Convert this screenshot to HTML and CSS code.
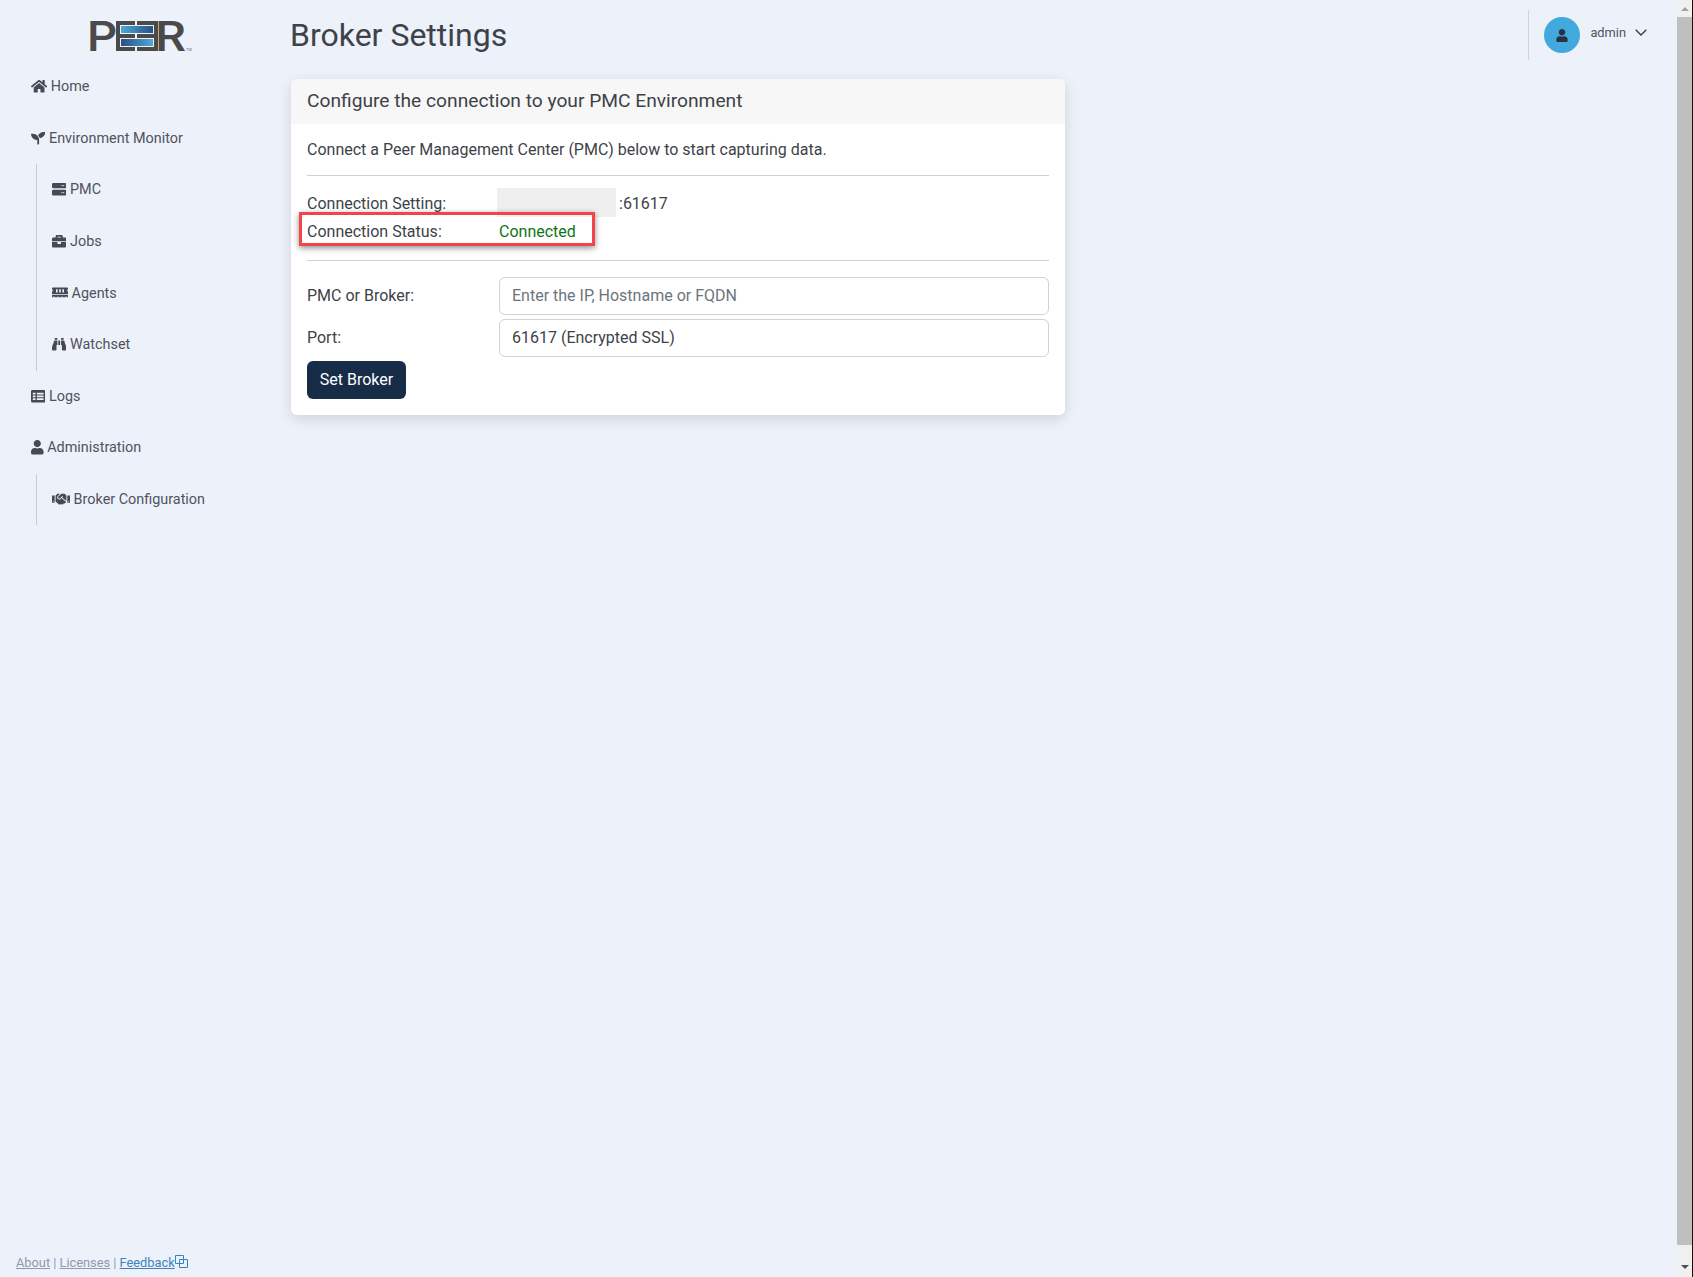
FILE: index.html
```html
<!DOCTYPE html>
<html lang="en">
<head>
  <meta charset="UTF-8" />
  <title>Broker Settings</title>
  <link rel="stylesheet" href="styles.css">
</head>
<body>

  <div class="app">

    <!-- Sidebar -->
    <aside class="sidebar">
      <svg class="logo" viewBox="-4 -10 118 52" width="118" height="52" role="img" aria-label="PEER">
        <defs>
          <linearGradient id="barTop" x1="0" x2="1" y1="0" y2="0">
            <stop offset="0" stop-color="#4fa8d8"/>
            <stop offset="1" stop-color="#2b4f80"/>
          </linearGradient>
          <linearGradient id="barBottom" x1="0" x2="1" y1="0" y2="0">
            <stop offset="0" stop-color="#2b4f80"/>
            <stop offset="1" stop-color="#4fa8d8"/>
          </linearGradient>
        </defs>
        <text class="logo-letter" x="-3" y="30.5" textLength="30" lengthAdjust="spacingAndGlyphs">P</text>
        <text class="logo-letter" x="65" y="30.5" textLength="31" lengthAdjust="spacingAndGlyphs">R</text>
        <!-- the two mirrored E's around the blue bars -->
        <rect x="26" y="1" width="4" height="30" fill="#4a4a4a"/>
        <rect x="26" y="1" width="19" height="4" fill="#4a4a4a"/>
        <rect x="26" y="14" width="19" height="4" fill="#4a4a4a"/>
        <rect x="26" y="27" width="19" height="4" fill="#4a4a4a"/>
        <rect x="64" y="1" width="4" height="30" fill="#4a4a4a"/>
        <rect x="47" y="1" width="21" height="4" fill="#4a4a4a"/>
        <rect x="47" y="14" width="21" height="4" fill="#4a4a4a"/>
        <rect x="47" y="27" width="21" height="4" fill="#4a4a4a"/>
        <rect x="31" y="6" width="32" height="7" fill="url(#barTop)"/>
        <rect x="31" y="19" width="32" height="7" fill="url(#barBottom)"/>
        <text class="logo-tm" x="96" y="31">TM</text>
      </svg>

      <nav class="nav">
        <a class="nav-item">
          <svg class="icon" viewBox="0 0 576 512"><path d="M280.37 148.26L96 300.11V464a16 16 0 0 0 16 16l112.06-.29a16 16 0 0 0 15.92-16V368a16 16 0 0 1 16-16h64a16 16 0 0 1 16 16v95.64a16 16 0 0 0 16 16.05L464 480a16 16 0 0 0 16-16V300L295.67 148.26a12.19 12.19 0 0 0-15.3 0zM571.6 251.47L488 182.56V44.05a12 12 0 0 0-12-12h-56a12 12 0 0 0-12 12v72.61L318.47 43a48 48 0 0 0-61 0L4.34 251.47a12 12 0 0 0-1.6 16.9l25.5 31A12 12 0 0 0 45.15 301l235.22-193.74a12.19 12.19 0 0 1 15.3 0L530.9 301a12 12 0 0 0 16.9-1.6l25.5-31a12 12 0 0 0-1.7-16.93z"/></svg>
          Home
        </a>
        <a class="nav-item">
          <svg class="icon" viewBox="0 0 512 512"><path d="M64 96H0c0 123.7 100.3 224 224 224v144c0 8.8 7.2 16 16 16h32c8.8 0 16-7.2 16-16V320C288 196.3 187.7 96 64 96zm384-64c-84.2 0-157.4 46.5-195.7 115.2 27.7 30.2 48.2 66.9 59 107.6C424 243.1 512 147.9 512 32h-64z"/></svg>
          Environment Monitor
        </a>
        <div class="sub-nav">
          <a class="nav-item">
            <svg class="icon" viewBox="0 0 512 512"><path fill-rule="evenodd" d="M48 32h416a48 48 0 0 1 48 48v96a48 48 0 0 1-48 48H48a48 48 0 0 1-48-48V80a48 48 0 0 1 48-48zm368 72a24 24 0 1 0 0 48 24 24 0 0 0 0-48zm-64 0a24 24 0 1 0 0 48 24 24 0 0 0 0-48zM48 272h416a48 48 0 0 1 48 48v112a48 48 0 0 1-48 48H48a48 48 0 0 1-48-48V320a48 48 0 0 1 48-48zm368 80a24 24 0 1 0 0 48 24 24 0 0 0 0-48zm-64 0a24 24 0 1 0 0 48 24 24 0 0 0 0-48z"/></svg>
            PMC
          </a>
          <a class="nav-item">
            <svg class="icon" viewBox="0 0 512 512"><path d="M320 336c0 8.84-7.16 16-16 16h-96c-8.84 0-16-7.16-16-16v-48H0v144c0 25.6 22.4 48 48 48h416c25.6 0 48-22.4 48-48V288H320v48zm144-208h-80V80c0-25.6-22.4-48-48-48H176c-25.6 0-48 22.4-48 48v48H48c-25.6 0-48 22.4-48 48v80h512v-80c0-25.6-22.4-48-48-48zm-144 0H192V96h128v32z"/></svg>
            Jobs
          </a>
          <a class="nav-item">
            <svg class="icon icon-memory" viewBox="0 0 640 512"><path d="M640 130.94V96c0-17.67-14.33-32-32-32H32C14.33 64 0 78.33 0 96v34.94c18.6 6.61 32 24.19 32 45.06s-13.4 38.45-32 45.06V320h640v-98.94c-18.6-6.61-32-24.19-32-45.06s13.4-38.45 32-45.06zM224 256h-64V128h64v128zm128 0h-64V128h64v128zm128 0h-64V128h64v128zM0 448h64v-26.67c0-8.84 7.16-16 16-16s16 7.16 16 16V448h128v-26.67c0-8.84 7.16-16 16-16s16 7.16 16 16V448h128v-26.67c0-8.84 7.16-16 16-16s16 7.16 16 16V448h128v-26.67c0-8.84 7.16-16 16-16s16 7.16 16 16V448h64v-96H0v96z"/></svg>
            Agents
          </a>
          <a class="nav-item">
            <svg class="icon" viewBox="0 0 512 512"><path d="M416 48c0-8.84-7.16-16-16-16h-64c-8.84 0-16 7.16-16 16v48h96V48zM63.91 159.99C61.4 253.84 3.46 274.22 0 404v44c0 17.67 14.33 32 32 32h96c17.67 0 32-14.33 32-32V288h32V128H95.84c-17.63 0-31.45 14.37-31.93 31.99zm384.18 0c-.48-17.62-14.3-31.99-31.93-31.99H320v160h32v160c0 17.67 14.33 32 32 32h96c17.67 0 32-14.33 32-32v-44c-3.46-129.78-61.4-150.16-63.91-244.01zM176 32h-64c-8.84 0-16 7.16-16 16v48h96V48c0-8.84-7.16-16-16-16zm48 256h64V128h-64v160z"/></svg>
            Watchset
          </a>
        </div>
        <a class="nav-item">
          <svg class="icon" viewBox="0 0 512 512"><path fill-rule="evenodd" d="M48 32h416a48 48 0 0 1 48 48v352a48 48 0 0 1-48 48H48a48 48 0 0 1-48-48V80a48 48 0 0 1 48-48zm16 104v64h96v-64zm144 0v64h240v-64zM64 232v64h96v-64zm144 0v64h240v-64zM64 328v64h96v-64zm144 0v64h240v-64z"/></svg>
          Logs
        </a>
        <a class="nav-item">
          <svg class="icon" viewBox="0 0 448 512"><path d="M224 256c70.7 0 128-57.3 128-128S294.7 0 224 0 96 57.3 96 128s57.3 128 128 128zm89.6 32h-16.7c-22.2 10.2-46.9 16-72.9 16s-50.6-5.8-72.9-16h-16.7C60.2 288 0 348.2 0 422.4V464c0 26.5 21.5 48 48 48h352c26.5 0 48-21.5 48-48v-41.6c0-74.2-60.2-134.4-134.4-134.4z"/></svg>
          Administration
        </a>
        <div class="sub-nav">
          <a class="nav-item">
            <svg class="icon" viewBox="0 0 640 512"><path d="M434.7 64h-85.9c-8 0-15.7 3-21.6 8.4l-98.3 90c-.1.1-.2.3-.3.4-16.6 15.6-16.3 40.5-2.1 56 12.7 13.9 39.4 17.6 56.1 2.7.1-.1.3-.1.4-.2l79.9-73.2c6.5-5.9 16.7-5.5 22.6 1 6 6.5 5.5 16.6-1 22.6l-26.1 23.9L504 313.8c2.9 2.4 5.5 5 7.9 7.7V128l-54.6-54.6c-5.9-6-14.1-9.4-22.6-9.4zM544 128.2v223.9c0 17.7 14.3 32 32 32h64V128.2h-96zm48 223.9c-8.8 0-16-7.2-16-16s7.2-16 16-16 16 7.2 16 16-7.2 16-16 16zM0 384h64c17.7 0 32-14.3 32-32V128.2H0V384zm48-63.9c8.8 0 16 7.2 16 16s-7.2 16-16 16-16-7.2-16-16c0-8.9 7.2-16 16-16zm435.9 18.6L334.6 217.5l-30 27.5c-29.7 27.1-75.2 24.5-101.7-4.4-26.9-29.4-24.8-74.9 4.4-101.7L289.1 64h-83.8c-8.5 0-16.6 3.4-22.6 9.4L128 128v223.9h18.3l90.5 81.9c27.4 22.3 67.7 18.1 90-9.3l.2-.2 17.9 15.5c15.9 13 39.4 10.5 52.3-5.4l31.4-38.6 5.4 4.4c13.7 11.1 33.9 9.1 45-4.7l9.5-11.7c11.2-13.8 9.1-33.9-4.6-45.1z"/></svg>
            Broker Configuration
          </a>
        </div>
      </nav>

      <footer class="foot">
        <a class="foot-link">About</a> | <a class="foot-link">Licenses</a> | <a class="foot-link foot-link-on">Feedback<svg class="foot-icon" viewBox="0 0 13 13"><path d="M.5.5h8v8h-8zM4.5 4.5h8v8h-8z" fill="none" stroke="currentColor"/></svg></a>
      </footer>
    </aside>

    <!-- Main -->
    <main class="main">
      <header class="topbar">
        <h1 class="title">Broker Settings</h1>
        <div class="user">
          <span class="avatar">
            <svg viewBox="0 0 448 512" width="12" height="13"><path d="M224 256c70.7 0 128-57.3 128-128S294.7 0 224 0 96 57.3 96 128s57.3 128 128 128zm89.6 32h-16.7c-22.2 10.2-46.9 16-72.9 16s-50.6-5.8-72.9-16h-16.7C60.2 288 0 348.2 0 422.4V464c0 26.5 21.5 48 48 48h352c26.5 0 48-21.5 48-48v-41.6c0-74.2-60.2-134.4-134.4-134.4z"/></svg>
          </span>
          <span class="user-name">admin</span>
          <svg class="chevron" viewBox="0 0 12 7" width="12" height="7"><path d="M.7.7L6 6l5.3-5.3" fill="none" stroke="#33394a" stroke-width="1.3"/></svg>
        </div>
      </header>

      <section class="card">
        <div class="card-head">Configure the connection to your PMC Environment</div>
        <div class="card-body">
          <p class="intro">Connect a Peer Management Center (PMC) below to start capturing data.</p>
          <hr class="rule">
          <div class="row">
            <span>Connection Setting:</span>
            <span class="value"><span class="redacted"></span>:61617</span>
          </div>
          <div class="row row-status">
            <span>Connection Status:</span>
            <span class="connected">Connected</span>
            <div class="callout"></div>
          </div>
          <hr class="rule rule-second">
          <div class="field">
            <label class="field-label">PMC or Broker:</label>
            <input class="input" type="text" placeholder="Enter the IP, Hostname or FQDN">
          </div>
          <div class="field">
            <label class="field-label">Port:</label>
            <input class="input" type="text" value="61617 (Encrypted SSL)">
          </div>
          <button class="btn">Set Broker</button>
        </div>
      </section>
    </main>
  </div>

  <!-- Scrollbar -->
  <div class="scrollbar">
    <span class="arrow arrow-up"></span>
    <span class="thumb"></span>
    <span class="arrow arrow-down"></span>
  </div>

</body>
</html>
```

FILE: styles.css
```css
html, body {
  margin: 0;
  padding: 0;
  height: 100%;
  overflow: hidden;
  font-family: 'Roboto', sans-serif;
  background: #edf1f9;
  color: #3d4249;
}

.app {
  display: flex;
  height: 100vh;
}

/* Sidebar */
.sidebar {
  width: 291px;
  flex: none;
  display: flex;
  flex-direction: column;
}

.logo {
  display: block;
  margin: 10px 0 -1px 86px;
  flex: none;
}

.logo-letter {
  font-family: 'Roboto', sans-serif;
  font-weight: 500;
  font-size: 42px;
  fill: #4a4a4a;
}

.logo-tm {
  font-family: 'Liberation Sans', sans-serif;
  font-size: 4px;
  fill: #6a6a6a;
}

.nav {
  padding-left: 31px;
}

.nav-item {
  display: flex;
  align-items: center;
  height: 51.6px;
  font-size: 14.4px;
  color: #50535f;
}

.icon {
  height: 14.4px;
  width: auto;
  margin: 0 3.6px 1px 0;
  fill: #474a54;
  flex: none;
}

.icon-memory {
  height: 12.8px;
}

.sub-nav {
  margin-left: 5px;
  padding-left: 15px;
  border-left: 1px solid #cdcbc9;
}

.foot {
  margin-top: auto;
  padding: 0 0 7px 16px;
  font-size: 12.8px;
  line-height: 15px;
  color: #8d99ad;
}

.foot-link {
  text-decoration: underline;
}

.foot-link-on {
  color: #3c83bd;
}

.foot-icon {
  width: 13px;
  height: 13px;
  vertical-align: -1px;
}

/* Main */
.main {
  flex: 1;
  min-width: 0;
}

.topbar {
  display: flex;
  justify-content: space-between;
  height: 79px;
}

.title {
  margin: 15px 0 0 -1px;
  font-size: 32px;
  line-height: 40px;
  font-weight: 400;
  color: #3d4249;
}

.user {
  display: flex;
  align-items: center;
  align-self: flex-start;
  height: 50px;
  margin: 10px 46px 0 0;
  padding-left: 15px;
  border-left: 1px solid #d0d3d8;
}

.avatar {
  display: flex;
  justify-content: center;
  align-items: center;
  width: 36px;
  height: 36px;
  border-radius: 50%;
  background: #41a9dc;
  margin-right: 10px;
}

.avatar svg {
  fill: #2b3140;
}

.user-name {
  font-size: 12.8px;
  color: #50535f;
  margin: 0 9px 5px 0;
}

.chevron {
  margin-bottom: 5px;
}

.card {
  width: 774px;
  background: #fff;
  border-radius: 6px;
  box-shadow: 0 4px 14px rgba(0, 0, 0, 0.13);
}

.card-head {
  height: 45px;
  line-height: 43px;
  padding: 0 16px;
  font-size: 19.2px;
  background: #f7f7f7;
  border-radius: 6px 6px 0 0;
}

.card-body {
  padding: 14px 16px 16px;
  font-size: 16px;
}

.intro {
  margin: 0;
  line-height: 24px;
}

.rule {
  margin: 13px 0;
  border: 0;
  border-top: 1px solid #cfd0d2;
}

.rule-second {
  margin: 15px 0 16px;
}

.row {
  display: grid;
  grid-template-columns: 192px 1fr;
  align-items: center;
  height: 28px;
  position: relative;
}

.value {
  display: flex;
  align-items: center;
}

.redacted {
  width: 119px;
  height: 29px;
  margin: -2px 3px 0 -2px;
  background: #efefef;
}

.connected {
  color: #0f7516;
}

.callout {
  position: absolute;
  left: -8px;
  top: -5px;
  width: 290px;
  height: 28px;
  border: 3px solid #f4444a;
  box-shadow: 0 2px 6px rgba(0, 0, 0, 0.45);
}

.field {
  display: grid;
  grid-template-columns: 192px 1fr;
  align-items: center;
  margin-bottom: 4px;
}

.field-label {
  margin-bottom: 2px;
}

.input {
  box-sizing: border-box;
  width: 100%;
  height: 38px;
  padding: 0 12px 2px;
  border: 1px solid #ced2d9;
  border-radius: 6px;
  font-family: inherit;
  font-size: 16px;
  color: #3d4249;
  background: #fff;
  outline: none;
}

.input::placeholder {
  color: #6c757d;
  opacity: 1;
}

.btn {
  display: block;
  width: 99px;
  height: 38px;
  padding: 0 0 2px;
  border: 0;
  border-radius: 6px;
  background: #172c47;
  color: #fff;
  font-family: inherit;
  font-size: 16px;
}

/* Scrollbar */
.scrollbar {
  position: fixed;
  top: 0;
  right: 0;
  bottom: 0;
  width: 15px;
  background: #f0f0f0;
  border-right: 1px solid #111;
  display: flex;
  flex-direction: column;
  align-items: center;
}

.thumb {
  width: 100%;
  height: 1228px;
  margin-right: 1px;
  background: #bfbfbf;
}

.arrow {
  width: 0;
  height: 0;
  border-left: 4px solid transparent;
  border-right: 4px solid transparent;
}

.arrow-up {
  margin: 7px 0 6px;
  border-bottom: 4px solid #a3a3a3;
}

.arrow-down {
  margin-top: 20px;
  border-top: 4px solid #505050;
}
```
